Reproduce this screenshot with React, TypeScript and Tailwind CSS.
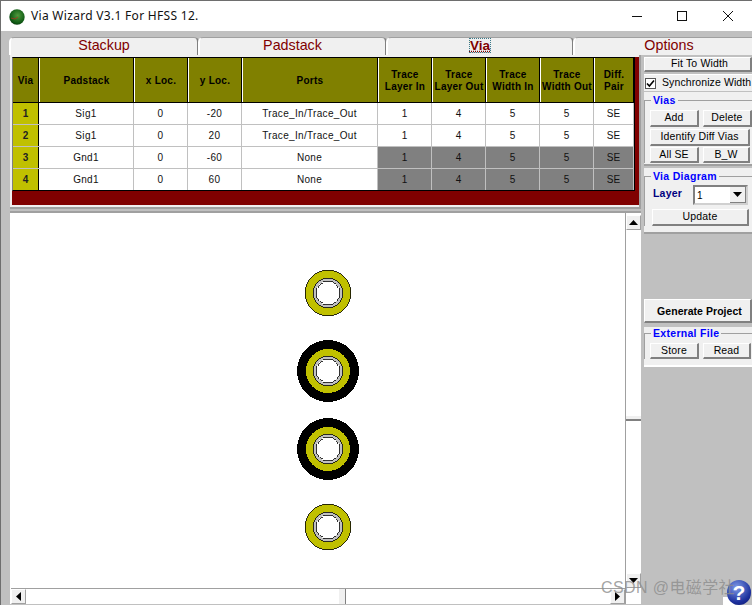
const rows = [
  ["1", "Sig1", "0", "-20", "Trace_In/Trace_Out", false],
  ["2", "Sig1", "0", "20", "Trace_In/Trace_Out", false],
  ["3", "Gnd1", "0", "-60", "None", true],
  ["4", "Gnd1", "0", "60", "None", true],
] as const;

const heads = ["Via", "Padstack", "x Loc.", "y Loc.", "Ports", "Trace Layer In", "Trace Layer Out", "Trace Width In", "Trace Width Out", "Diff. Pair"];
const grid = "grid grid-cols-[26px_95px_54px_54px_136px_54px_54px_54px_54px_40px]";

function Tab({ label, active, w }: { label: string; active?: boolean; w: string }) {
  return (
    <div className={`${w} shrink-0 h-[18px] -mr-px pb-[2px] flex items-center justify-center bg-[#f0f0f0] border-l-2 border-l-white border-r-2 border-r-[#808080] border-t border-t-[#a0a0a0] rounded-tl-[5px] rounded-tr-[5px] text-[#800000] leading-none ${active ? "text-[13.5px] font-bold" : "text-[14.3px]"}`}>
      {active ? <span className="underline decoration-dotted outline-1 outline-dotted outline-[#3a7a8a]">{label}</span> : label}
    </div>
  );
}

function Btn({ children, className = "" }: { children: React.ReactNode; className?: string }) {
  return (
    <div className={`h-[17px] pb-px flex items-center justify-center bg-[#f0f0f0] border-t border-l border-t-white border-l-white border-r-2 border-b-2 border-r-[#808080] border-b-[#808080] text-[10.5px] tracking-[0.15px] text-black leading-none ${className}`}>
      {children}
    </div>
  );
}

function Legend({ children }: { children: React.ReactNode }) {
  return (
    <div className="absolute -top-[6px] left-[6px] px-[2px] bg-[#f0f0f0] text-[10.5px] font-bold tracking-[0.3px] text-[#0000ff] leading-[11px] whitespace-nowrap">
      {children}
    </div>
  );
}

function Via({ black }: { black?: boolean }) {
  return (
    <svg width="64" height="64" viewBox="0 0 64 64" shapeRendering="crispEdges" className="block">
      {black && <circle cx="32" cy="32" r="31" fill="#000" />}
      <circle cx="32" cy="32" r={black ? 22 : 23} fill="#c0c000" stroke="#000" strokeWidth={black ? 0 : 0.8} />
      <circle cx="32" cy="32" r="15" fill="#c0c0c0" stroke="#000" strokeWidth="0.8" />
      <circle cx="32" cy="32" r="12" fill="#fff" stroke="#000" strokeWidth="0.8" />
    </svg>
  );
}

function Arrow({ dir }: { dir: "up" | "down" | "left" | "right" }) {
  const p = { up: "0,5 9,5 4.5,0", down: "0,0 9,0 4.5,5", left: "5,0 5,9 0,4.5", right: "0,0 0,9 5,4.5" }[dir];
  const vert = dir === "up" || dir === "down";
  return (
    <svg width={vert ? 9 : 5} height={vert ? 5 : 9} viewBox={vert ? "0 0 9 5" : "0 0 5 9"}>
      <polygon points={p} fill="#000" />
    </svg>
  );
}

function ScrollBtn({ dir, className = "" }: { dir: "up" | "down" | "left" | "right"; className?: string }) {
  return (
    <div className={`w-[15px] h-[15px] shrink-0 flex items-center justify-center bg-[#f0f0f0] border-t border-l border-t-white border-l-white border-r border-b border-r-[#a0a0a0] border-b-[#a0a0a0] ${className}`}>
      <Arrow dir={dir} />
    </div>
  );
}

export default function App() {
  return (
    <div className="relative w-[752px] h-[605px] overflow-hidden bg-[#c0c0c0] font-['Liberation_Sans',sans-serif] border-t border-t-[#6e6e6e] border-l border-l-[#6e6e6e]">
      {/* Title bar */}
      <div className="h-[30px] bg-white flex items-center">
        <svg width="16" height="16" viewBox="0 0 16 16" className="ml-[8px] mr-[6px] mt-px">
          <defs>
            <radialGradient id="g" cx="0.55" cy="0.4" r="0.7">
              <stop offset="0" stopColor="#4f9a3c" />
              <stop offset="0.7" stopColor="#0f5a14" />
              <stop offset="1" stopColor="#06280a" />
            </radialGradient>
          </defs>
          <circle cx="8" cy="8" r="7.7" fill="url(#g)" />
          <path d="M2 9l4 1 3-2" stroke="#b03020" strokeWidth="0.8" fill="none" />
        </svg>
        <span className="font-['Noto_Sans',sans-serif] text-[12px] tracking-[0.3px] text-[#111]">Via Wizard V3.1 For HFSS 12.</span>
        <div className="ml-auto flex items-center h-full">
          <svg width="12" height="12" viewBox="0 0 12 12" className="mr-[33px]"><path d="M1 6.5h10" stroke="#111" strokeWidth="1" /></svg>
          <svg width="12" height="12" viewBox="0 0 12 12" className="mr-[34px]"><rect x="1.5" y="1.5" width="9" height="9" fill="none" stroke="#111" strokeWidth="1" /></svg>
          <svg width="12" height="12" viewBox="0 0 12 12" className="mr-[18px]"><path d="M1 1l10 10M11 1L1 11" stroke="#111" strokeWidth="1" /></svg>
        </div>
      </div>

      {/* Tabs */}
      <div className="flex pl-[8px] pt-[6px]">
        <Tab label="Stackup" w="w-[190px]" />
        <Tab label="Padstack" w="w-[189px]" />
        <Tab label="Via" active w="w-[188px]" />
        <Tab label="Options" w="w-[192px]" />
      </div>

      <div className="flex">
        {/* Left column */}
        <div className="w-[631px] shrink-0 ml-[9px] flex flex-col">
          {/* Table panel */}
          <div className="h-[154px] bg-[#f0f0f0] pl-[2px] pt-[2px] border-r-2 border-b-2 border-r-[#a0a0a0] border-b-[#a0a0a0]">
            <div className="w-[627px] h-[148px] bg-[#800000]">
              <div className="w-[623px] bg-black border-t border-b border-r border-black border-l border-l-[#808080] text-[10px] leading-[12px]">
                <div className={grid}>
                  {heads.map((h, i) => (
                    <div key={h} className={`h-[44px] pt-px flex items-center justify-center text-center bg-[#808000] font-bold tracking-[0.25px] text-black border-r border-r-black ${i === 0 ? "" : "border-l border-l-white"}`}>
                      {h}
                    </div>
                  ))}
                </div>
                {rows.map((r, idx) => (
                  <div key={r[0]} className={`${grid} border-t ${idx === 0 ? "border-t-black" : "border-t-[#c0c0c0]"}`}>
                    <div className="h-[21px] bg-[#c0c000] border-r border-black flex items-center justify-center font-bold text-[#222]">{r[0]}</div>
                    {[r[1], r[2], r[3], r[4]].map((c, j) => (
                      <div key={j} className="h-[21px] bg-white border-r border-[#c0c0c0] flex items-center justify-center text-[#111] tracking-[0.32px]">{c}</div>
                    ))}
                    {["1", "4", "5", "5", "SE"].map((c, j) => (
                      <div key={j} className={`h-[21px] border-r border-[#c0c0c0] flex items-center justify-center text-[#111] ${r[5] ? "bg-[#808080]" : "bg-white"}`}>{c}</div>
                    ))}
                  </div>
                ))}
              </div>
            </div>
          </div>

          {/* Diagram canvas */}
          <div className="relative mt-[2px] h-[393px] bg-white border-t-2 border-t-[#a0a0a0] flex">
            <div className="flex-1 flex flex-col min-w-0">
              <div className="flex-1 flex flex-col items-center pl-[20px] pt-[48px] gap-[14px]">
                <Via />
                <Via black />
                <Via black />
                <Via />
              </div>
              <div className="h-[16px] flex ml-[1px] border-t border-[#a0a0a0]">
                <ScrollBtn dir="left" />
                <div className="w-[313px] bg-white" />
                <div className="w-[7px] bg-[#f0f0f0] border-r border-[#808080]" />
                <div className="flex-1 bg-white" />
                <ScrollBtn dir="right" />
              </div>
            </div>
            <div className="w-[16px] flex flex-col border-l border-[#a0a0a0] bg-white pt-[2px]">
              <ScrollBtn dir="up" />
              <div className="h-[185px] bg-white" />
              <div className="h-[6px] bg-[#f0f0f0] border-t border-t-white border-b-2 border-b-[#808080]" />
              <div className="flex-1" />
              <ScrollBtn dir="down" className="mb-[16px]" />
            </div>
          </div>
        </div>

        {/* Right column */}
        <div className="w-[108px] shrink-0 ml-[3px] flex flex-col">
          <Btn className="w-full !h-[15px] mt-[2px] pl-[4px] border-r-0">Fit To Width</Btn>
          <div className="h-[17px] mt-[2px] bg-[#f0f0f0] flex items-center border-t border-t-white">
            <div className="w-[11px] h-[11px] ml-[1px] mr-[6px] bg-white border border-[#555] flex items-center justify-center">
              <svg width="9" height="9" viewBox="0 0 9 9"><path d="M1 4.5l2.4 2.6L8 1.5" stroke="#000" strokeWidth="1.6" fill="none" /></svg>
            </div>
            <span className="text-[10.5px] tracking-[0.1px] whitespace-nowrap text-black">Synchronize Width</span>
          </div>
          <div className="h-[74px] bg-[#f0f0f0] mt-[1px] pt-[8px] border-b-2 border-b-[#a0a0a0]">
            <div className="relative border-t border-l border-[#a0a0a0] pt-[9px] pl-[5px]">
              <Legend>Vias</Legend>
              <div className="flex gap-[4px]"><Btn className="w-[49px]">Add</Btn><Btn className="w-[49px]">Delete</Btn></div>
              <Btn className="w-[100px] mt-[2px]">Identify Diff Vias</Btn>
              <div className="flex gap-[4px] mt-px"><Btn className="w-[49px] !h-[16px] !pb-0">All SE</Btn><Btn className="w-[47px] !h-[16px] !pb-0">B_W</Btn></div>
            </div>
          </div>
          <div className="h-[66px] mt-[2px] bg-[#f0f0f0] pt-[8px] border-b-2 border-b-[#a0a0a0]">
            <div className="relative border-t border-l border-[#a0a0a0] pt-[8px] pl-[7px]">
              <Legend>Via Diagram</Legend>
              <div className="flex items-center">
                <span className="w-[41px] pl-px pb-[2px] text-[10.5px] font-bold text-[#000080] tracking-[0.2px]">Layer</span>
                <div className="w-[55px] h-[20px] bg-white border-2 border-t-[#808080] border-l-[#808080] border-r-[#d0d0d0] border-b-[#d0d0d0] flex items-center pl-[2px] text-[10px]">
                  1
                  <div className="ml-auto w-[16px] h-[16px] bg-[#f0f0f0] flex items-center justify-center border-r border-b border-[#808080]"><Arrow dir="down" /></div>
                </div>
              </div>
              <Btn className="w-[97px] mt-[4px]">Update</Btn>
            </div>
          </div>
          <div className="h-[65px]" />
          <Btn className="w-full !h-[24px] !pb-0 pt-[2px] pl-[4px] font-bold border-r-0 !tracking-[0.05px]">Generate Project</Btn>
          <div className="h-[40px] mt-[4px] bg-[#f0f0f0] pt-[6px] border-b-2 border-b-white">
            <div className="relative border-t border-l border-[#a0a0a0] pt-[9px] pl-[5px]">
              <Legend>External File</Legend>
              <div className="flex gap-[4px]"><Btn className="w-[49px] !h-[16px] !pb-0">Store</Btn><Btn className="w-[48px] !h-[16px] !pb-0">Read</Btn></div>
            </div>
          </div>
        </div>
      </div>

      {/* Help badge */}
      <div className="absolute left-[722px] top-[596px] w-[12px] h-[9px] bg-white" />
      <div className="absolute left-[726px] top-[579px] w-[24px] h-[25px] rounded-full bg-[radial-gradient(circle_at_40%_30%,#7f9be8,#1c2f9c_65%,#0b1566)] flex items-center justify-center text-white font-bold text-[21px] leading-none">?</div>

      {/* Watermark */}
      <div className="absolute left-[600px] top-[575px] text-[16px] tracking-[0.4px] text-[#8c8c8c]/80 whitespace-nowrap font-['Liberation_Sans','Noto_Sans_CJK_SC',sans-serif]">CSDN @电磁学社</div>
    </div>
  );
}
